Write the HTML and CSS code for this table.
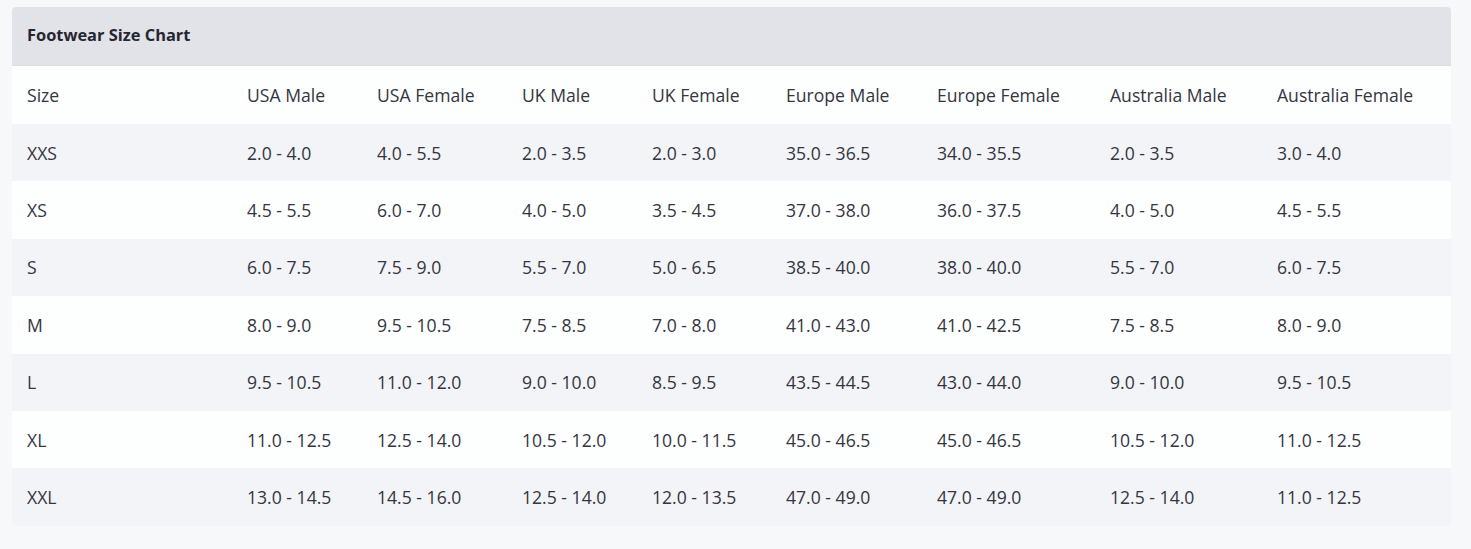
FILE: index.html
```html
<!DOCTYPE html>
<html>
<head>
<meta charset="utf-8">
<link rel="stylesheet" href="styles.css">
</head>
<body>
<div class="card">
  <div class="card-head">Footwear Size Chart</div>
  <table class="chart">
    <colgroup>
      <col class="c1"><col class="c2"><col class="c3"><col class="c4"><col class="c5"><col class="c6"><col class="c7"><col class="c8"><col class="c9">
    </colgroup>
    <thead>
      <tr><th>Size</th><th>USA Male</th><th>USA Female</th><th>UK Male</th><th>UK Female</th><th>Europe Male</th><th>Europe Female</th><th>Australia Male</th><th>Australia Female</th></tr>
    </thead>
    <tbody>
      <tr><td>XXS</td><td>2.0 - 4.0</td><td>4.0 - 5.5</td><td>2.0 - 3.5</td><td>2.0 - 3.0</td><td>35.0 - 36.5</td><td>34.0 - 35.5</td><td>2.0 - 3.5</td><td>3.0 - 4.0</td></tr>
      <tr><td>XS</td><td>4.5 - 5.5</td><td>6.0 - 7.0</td><td>4.0 - 5.0</td><td>3.5 - 4.5</td><td>37.0 - 38.0</td><td>36.0 - 37.5</td><td>4.0 - 5.0</td><td>4.5 - 5.5</td></tr>
      <tr><td>S</td><td>6.0 - 7.5</td><td>7.5 - 9.0</td><td>5.5 - 7.0</td><td>5.0 - 6.5</td><td>38.5 - 40.0</td><td>38.0 - 40.0</td><td>5.5 - 7.0</td><td>6.0 - 7.5</td></tr>
      <tr><td>M</td><td>8.0 - 9.0</td><td>9.5 - 10.5</td><td>7.5 - 8.5</td><td>7.0 - 8.0</td><td>41.0 - 43.0</td><td>41.0 - 42.5</td><td>7.5 - 8.5</td><td>8.0 - 9.0</td></tr>
      <tr><td>L</td><td>9.5 - 10.5</td><td>11.0 - 12.0</td><td>9.0 - 10.0</td><td>8.5 - 9.5</td><td>43.5 - 44.5</td><td>43.0 - 44.0</td><td>9.0 - 10.0</td><td>9.5 - 10.5</td></tr>
      <tr><td>XL</td><td>11.0 - 12.5</td><td>12.5 - 14.0</td><td>10.5 - 12.0</td><td>10.0 - 11.5</td><td>45.0 - 46.5</td><td>45.0 - 46.5</td><td>10.5 - 12.0</td><td>11.0 - 12.5</td></tr>
      <tr><td>XXL</td><td>13.0 - 14.5</td><td>14.5 - 16.0</td><td>12.5 - 14.0</td><td>12.0 - 13.5</td><td>47.0 - 49.0</td><td>47.0 - 49.0</td><td>12.5 - 14.0</td><td>11.0 - 12.5</td></tr>
    </tbody>
  </table>
</div>
</body>
</html>
```

FILE: styles.css
```css
html, body {
  margin: 0;
  padding: 0;
  background: #f6f8f9;
}
body {
  padding: 7px 20px 0 12px;
  font-family: "Open Sans", "Noto Sans", sans-serif;
  color: #35353f;
}
.card {
  width: 1439px;
  border-radius: 4px;
  overflow: hidden;
  background: #fdfefe;
}
.card-head {
  height: 59px;
  box-sizing: border-box;
  padding: 0 15px 3px;
  display: flex;
  align-items: center;
  background: #e1e3e8;
  border-bottom: 1px solid #dadde2;
  font-weight: 700;
  font-size: 16.4px;
  color: #262631;
}
.chart {
  width: 1439px;
  border-collapse: collapse;
  table-layout: fixed;
  font-size: 17.6px;
}
.c1 { width: 220px; }
.c2 { width: 130px; }
.c3 { width: 145px; }
.c4 { width: 130px; }
.c5 { width: 134px; }
.c6 { width: 151px; }
.c7 { width: 173px; }
.c8 { width: 167px; }
.c9 { width: 189px; }
.chart th, .chart td {
  height: 57.4px;
  padding: 0 0 0 15px;
  text-align: left;
  font-weight: 400;
  vertical-align: middle;
  white-space: nowrap;
}
.chart th { height: 58px; }
.chart thead tr { background: #fdfefe; }
.chart tbody tr:nth-child(odd) { background: #f2f4f7; }
.chart tbody tr:nth-child(even) { background: #fdfefe; }
```
